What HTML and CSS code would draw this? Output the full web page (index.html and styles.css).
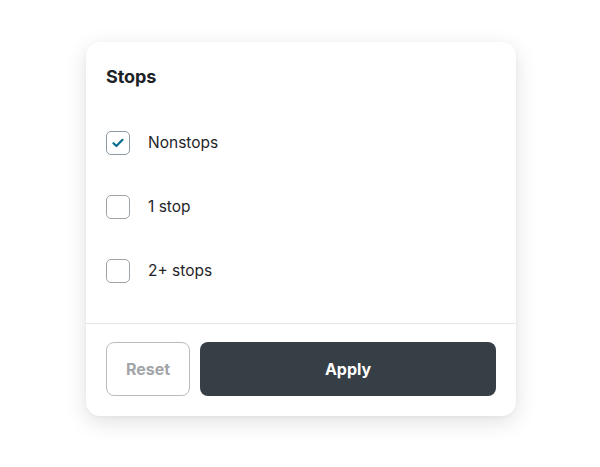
FILE: index.html
```html
<!DOCTYPE html>
<html>
<head>
<meta charset="utf-8">
<link rel="stylesheet" href="styles.css">
</head>
<body>
<div class="card">
  <div class="body">
    <div class="title">Stops</div>
    <ul class="list">
      <li class="row">
        <span class="box checked">
          <svg width="12" height="10" viewBox="0 0 12 10"><path d="M1.5 5.2 L4.4 8 L10.5 1.8" fill="none" stroke="#0b6d8e" stroke-width="2.2" stroke-linecap="round" stroke-linejoin="round"/></svg>
        </span>
        <span class="label">Nonstops</span>
      </li>
      <li class="row">
        <span class="box"></span>
        <span class="label">1 stop</span>
      </li>
      <li class="row">
        <span class="box"></span>
        <span class="label">2+ stops</span>
      </li>
    </ul>
  </div>
  <div class="footer">
    <button class="btn reset">Reset</button>
    <button class="btn apply">Apply</button>
  </div>
</div>
</body>
</html>
```

FILE: styles.css
```css
html, body {
  margin: 0;
  padding: 0;
  background: #ffffff;
}
body {
  font-family: Inter, "Noto Sans", sans-serif;
  color: #1c2226;
  width: 600px;
  height: 467px;
  display: flex;
  justify-content: center;
  padding: 42px 0 0 2px;
  box-sizing: border-box;
}
.card {
  width: 430px;
  height: 374px;
  background: #fff;
  border-radius: 14px;
  box-shadow: 0 6px 22px rgba(0, 0, 0, 0.12), 0 1px 4px rgba(0, 0, 0, 0.04);
  display: flex;
  flex-direction: column;
  box-sizing: border-box;
}
.body {
  padding: 21px 20px 20px 20px;
  border-bottom: 1px solid #e4e7ea;
}
.title {
  font-size: 18px;
  font-weight: 700;
  line-height: 28px;
  letter-spacing: -0.1px;
}
.list {
  list-style: none;
  margin: 20px 0 0 0;
  padding: 0;
}
.row {
  height: 64px;
  display: flex;
  align-items: center;
  gap: 18px;
}
.box {
  width: 24px;
  height: 24px;
  box-sizing: border-box;
  border: 1.5px solid #9ca3a9;
  border-radius: 5px;
  display: flex;
  align-items: center;
  justify-content: center;
}
.box.checked {
  border-color: #8c9aa3;
}
.label {
  font-size: 15.5px;
  line-height: 20px;
  color: #1f2529;
}
.footer {
  padding: 18px 20px 20px 20px;
  display: flex;
  gap: 10px;
}
.btn {
  height: 54px;
  border-radius: 8px;
  font-family: Inter, "Noto Sans", sans-serif;
  font-size: 16px;
  font-weight: 700;
  cursor: pointer;
}
.reset {
  width: 84px;
  background: #fff;
  border: 1px solid #b9bcbf;
  color: #a3a6a9;
}
.apply {
  flex: 1;
  background: #363e46;
  border: none;
  color: #fff;
}
```
